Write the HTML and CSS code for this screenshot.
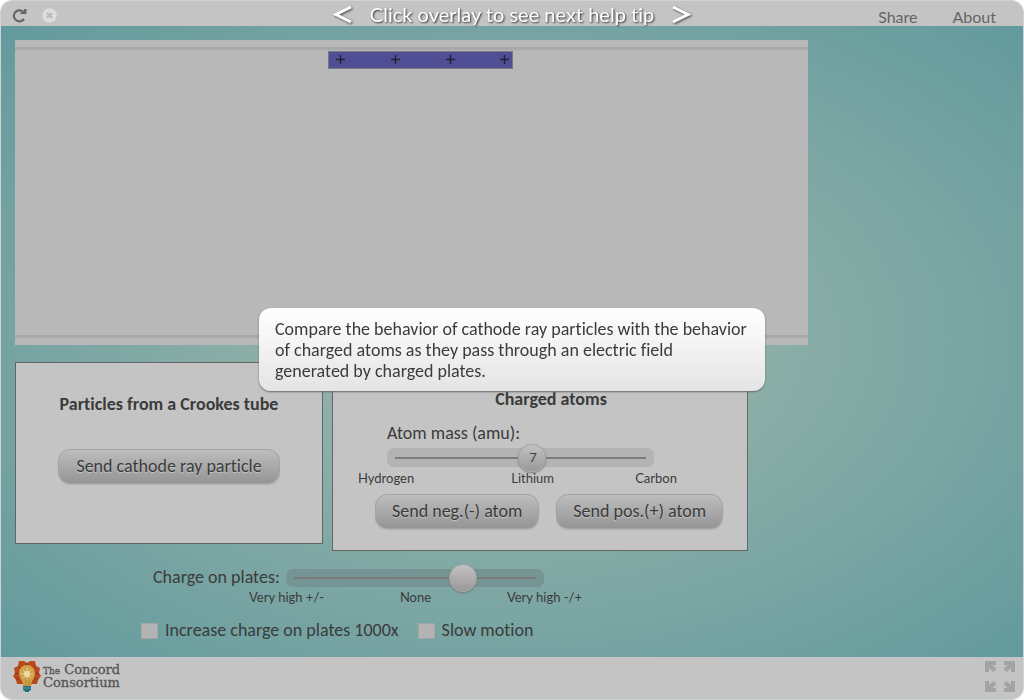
FILE: index.html
```html
<!DOCTYPE html>
<html lang="en">
<head>
<meta charset="utf-8">
<title>Crookes tube interactive</title>
<link rel="stylesheet" href="styles.css">
</head>
<body>
<div class="app">
  <header class="topbar">
    <div class="tools">
      <button class="icon-button" type="button" aria-label="Reload">
        <svg width="15" height="15" viewBox="0 0 15 15"><path d="M12 10.800A5.500 5.500 0 1 1 10.500 3.300" fill="none" stroke="#656565" stroke-width="2.200"/><path d="M14.500 1V6H8.500V4.500L10.500 4 12.500 1Z" fill="#656565"/></svg>
      </button>
      <button class="icon-button" type="button" aria-label="Stop">
        <svg width="15" height="15" viewBox="0 0 15 15"><circle cx="7.500" cy="7.500" r="7.200" fill="#dedede"/><path d="M5 5l5 5M10 5l-5 5" stroke="#b9b9b9" stroke-width="2"/></svg>
      </button>
    </div>
    <nav class="links">
      <a href="#share">Share</a>
      <a href="#about">About</a>
    </nav>
  </header>

  <main class="content">
    <div class="column">
      <section class="stage" aria-label="Simulation">
        <div class="plate">
          <svg width="9" height="9" viewBox="0 0 9 9"><path d="M4.500 0V9M0 4.500H9"/></svg>
          <svg width="9" height="9" viewBox="0 0 9 9"><path d="M4.500 0V9M0 4.500H9"/></svg>
          <svg width="9" height="9" viewBox="0 0 9 9"><path d="M4.500 0V9M0 4.500H9"/></svg>
          <svg width="9" height="9" viewBox="0 0 9 9"><path d="M4.500 0V9M0 4.500H9"/></svg>
        </div>
      </section>

      <div class="panels">
        <section class="panel tube">
          <h2>Particles from a Crookes tube</h2>
          <button class="push" type="button">Send cathode ray particle</button>
        </section>
        <section class="panel atoms">
          <h2>Charged atoms</h2>
          <label class="mass-label" for="mass">Atom mass (amu):</label>
          <div class="mass-slider">
            <input class="slider" id="mass" type="range" min="0" max="100" value="55">
            <output class="bubble" for="mass">7</output>
          </div>
          <div class="ticks mass-ticks"><span>Hydrogen</span><span class="mid">Lithium</span><span>Carbon</span></div>
          <div class="buttons">
            <button class="push" type="button">Send neg.(-) atom</button>
            <button class="push" type="button">Send pos.(+) atom</button>
          </div>
        </section>
      </div>

      <div class="charge">
        <label for="charge">Charge on plates:</label>
        <input class="slider on-teal" id="charge" type="range" min="0" max="100" value="71">
      </div>
      <div class="ticks charge-ticks"><span>Very high +/-</span><span>None</span><span>Very high -/+</span></div>

      <div class="checks">
        <label><input type="checkbox">Increase charge on plates 1000x</label>
        <label><input type="checkbox">Slow motion</label>
      </div>
    </div>
  </main>

  <footer class="bottombar">
    <div class="brand">
      <svg width="30" height="34" viewBox="0 0 30 34">
        <path d="M7 2l5 0 3 2 3-2 5 0 1 5 4 2-1 5 2 3-3 4-1 4-5 0-3 3H13l-3-3-5 0-1-4-3-4 2-3-1-5 4-2z" fill="#b9491c"/>
        <path d="M15 4l-2 5M15 4l2 5M6 7l4 4M24 7l-4 4M3 14l5 1M27 14l-5 1M4 21l5-3M26 21l-5-3" stroke="#8f3818"/>
        <path d="M15 6C10 6 7 10 7 14c0 6 4 7 4 13h8c0-6 4-7 4-13 0-4-3-8-8-8z" fill="#d0a04a"/>
        <path d="M15 9v12M9 15h12M11 11l8 8M19 11l-8 8" stroke="#e4d190"/>
        <circle cx="15" cy="15" r="3" fill="#e8dca9"/>
        <path d="M14 19v8M17 19v8" stroke="#b9832d"/>
        <path d="M11 27h8v4l-2 1v1h-4v-1l-2-1z" fill="#236f7d"/>
        <path d="M11 29h8" stroke="#60969c"/>
      </svg>
      <div class="brand-name"><div><small>The</small> Concord</div><div>Consortium</div></div>
    </div>
    <button class="icon-button" type="button" aria-label="Full screen">
      <svg width="30" height="31" viewBox="0 0 30 31" fill="#a0a4a2"><path id="corner" d="M0 0H11V4H7.500L11.500 8 8.500 11 4 7V11H0Z"/><use href="#corner" transform="translate(30 0) scale(-1 1)"/><use href="#corner" transform="translate(0 31) scale(1 -1)"/><use href="#corner" transform="translate(30 31) scale(-1 -1)"/></svg>
    </button>
  </footer>
</div>

<div class="overlay">
  <div class="prompt">
    <button type="button" aria-label="Previous tip"><svg width="19" height="20" viewBox="0 0 19 20"><path d="M18 3L3 10.500l15 7.500"/></svg></button>
    <span>Click overlay to see next help tip</span>
    <button type="button" aria-label="Next tip"><svg width="19" height="20" viewBox="0 0 19 20"><path d="M1 3l15 7.500-15 7.500"/></svg></button>
  </div>
  <p class="tip">Compare the behavior of cathode ray particles with the behavior of charged atoms as they pass through an electric field generated by charged plates.</p>
</div>
</body>
</html>
```
FILE: styles.css
```css
* { box-sizing: border-box; }

body {
  margin: 0;
  background: #fff;
  color: #3b3b3b;
  font: 18px/21px Carlito, Lato, sans-serif;
  font-variant-ligatures: none;
}

button { font: inherit; font-variant-ligatures: none; color: inherit; cursor: pointer; }
h2, p { margin: 0; }
svg { display: block; }

.app {
  display: flex;
  flex-direction: column;
  min-height: 100vh;
  border: 1px solid #cfd3d2;
  border-radius: 12px;
  overflow: hidden;
}

.topbar {
  display: flex;
  justify-content: space-between;
  align-items: center;
  height: 25px;
  padding: 3px 27px 0 11px;
  background: #c4c4c4;
}

.tools { display: flex; gap: 15px; }

.icon-button { padding: 0; border: 0; background: none; }

.links { display: flex; gap: 35px; padding-top: 4px; }
.links a {
  color: #656565;
  font: 16px/20px Lato, sans-serif;
  text-decoration: none;
}

.content {
  flex: 1;
  display: grid;
  grid-template-columns: minmax(0, 793fr) 201fr;
  padding: 14px;
  background: radial-gradient(ellipse farthest-corner at center, #a1b9ad 0%, #639a9d 100%);
}

.stage {
  height: 305px;
  padding-top: 3px;
  background: linear-gradient(#a8a8a8, #a8a8a8) 0 7px / 100% 3px no-repeat,
    linear-gradient(#a8a8a8, #a8a8a8) 0 295px / 100% 3px no-repeat, #b8b8b8;
}

.plate {
  display: flex;
  justify-content: space-between;
  align-items: center;
  width: 185px;
  height: 18px;
  margin: 8px 0 0 39.5%;
  padding: 0 3px 1px 7px;
  border: 1px solid #77777f;
  background: #504f96;
}
.plate path { stroke: #20203a; stroke-width: 1.5; }

.panels {
  display: grid;
  grid-template-columns: 308fr 416fr 51fr;
  align-items: start;
  gap: 9px;
  margin-top: 17px;
}

.panel { border: 1px solid #656565; background: #c4c4c4; }
.panel h2 { font-size: 18px; font-weight: 700; line-height: 20px; text-align: center; }

.tube {
  display: flex;
  flex-direction: column;
  align-items: center;
  gap: 35px;
  min-height: 182px;
  padding-top: 31px;
}

.atoms { padding: 26px 3px 21px 25px; }

.push {
  height: 35px;
  padding: 0 17px;
  border: 1px solid #a2a2a2;
  border-radius: 12px;
  background: linear-gradient(#bdbdbd, #959595);
  box-shadow: 0 1px 1px #b0b0b0;
  text-shadow: 0 1px 1px #c5c5c5;
  white-space: nowrap;
}

.mass-label { display: block; margin: 14px 0 4px 29px; }
.mass-slider { position: relative; width: 267px; margin-left: 29px; }

.slider {
  appearance: none;
  display: block;
  width: 100%;
  height: 19px;
  margin: 0;
  border-radius: 7px;
  background: linear-gradient(#7d7d7d, #7d7d7d) 8px center / calc(100% - 16px) 2px no-repeat, #b3b3b3;
}
.slider::-webkit-slider-thumb {
  appearance: none;
  width: 28px;
  height: 28px;
  border: 1px solid #a6a6a6;
  border-radius: 50%;
  background: linear-gradient(#c2c2c2, #999);
  box-shadow: 0 1px 2px #777;
}

.bubble {
  position: absolute;
  top: 0;
  left: 50%;
  width: 25px;
  line-height: 19px;
  font-size: 15px;
  text-align: center;
  pointer-events: none;
}

.ticks {
  display: flex;
  justify-content: space-between;
  font: 13px/16px Lato, sans-serif;
}
.mass-ticks { width: 319px; margin-top: 3px; }
.mass-ticks .mid { margin-left: 16px; }

.buttons { display: flex; gap: 17px; margin: 8px 0 0 17px; }
.buttons .push { padding: 0 16px; }

.charge {
  display: flex;
  align-items: center;
  gap: 6px;
  margin: 16px 0 0 138px;
}
.charge .slider { width: 258px; height: 18px; }
.charge .on-teal {
  background: linear-gradient(#7b7b79, #7b7b79) 8px center / calc(100% - 16px) 2px no-repeat, #749593;
}
.charge-ticks { width: 333px; margin: 1px 0 0 234px; }

.checks { display: flex; gap: 19px; margin: 15px 0 0 126px; }
.checks label { display: flex; align-items: center; gap: 7px; }
.checks input {
  appearance: none;
  width: 17px;
  height: 16px;
  margin: 0;
  border: 1px solid #a5a5a5;
  background: #b3b3b3;
}

.bottombar {
  display: flex;
  justify-content: space-between;
  align-items: center;
  height: 42px;
  padding: 0 8px 4px 11px;
  background: #c4c4c4;
}

.brand { display: flex; align-items: center; gap: 1px; }
.brand-name {
  color: #555;
  font: 13px/11px "DejaVu Serif", serif;
  -webkit-text-stroke: 0.3px #555;
}
.brand-name small { font-size: 9px; }

.overlay {
  position: fixed;
  inset: 0 0 1px;
  display: grid;
  place-items: center;
}

.prompt {
  position: absolute;
  top: 2px;
  display: flex;
  align-items: center;
  gap: 18px;
  color: #fff;
  font: 20px/24px Lato, sans-serif;
  font-variant-ligatures: none;
  text-shadow: 1px 1px 2px #333;
  white-space: nowrap;
}
.prompt button { padding: 0; border: 0; background: none; }
.prompt svg { filter: drop-shadow(1px 1px 1px #444); }
.prompt path { fill: none; stroke: #fff; stroke-width: 3; }

.tip {
  width: 506px;
  max-width: 90%;
  padding: 11px 16px 9px;
  border-radius: 12px;
  background: linear-gradient(#fff, #e4e4e4);
  box-shadow: 0 1px 2px #666;
}
```
